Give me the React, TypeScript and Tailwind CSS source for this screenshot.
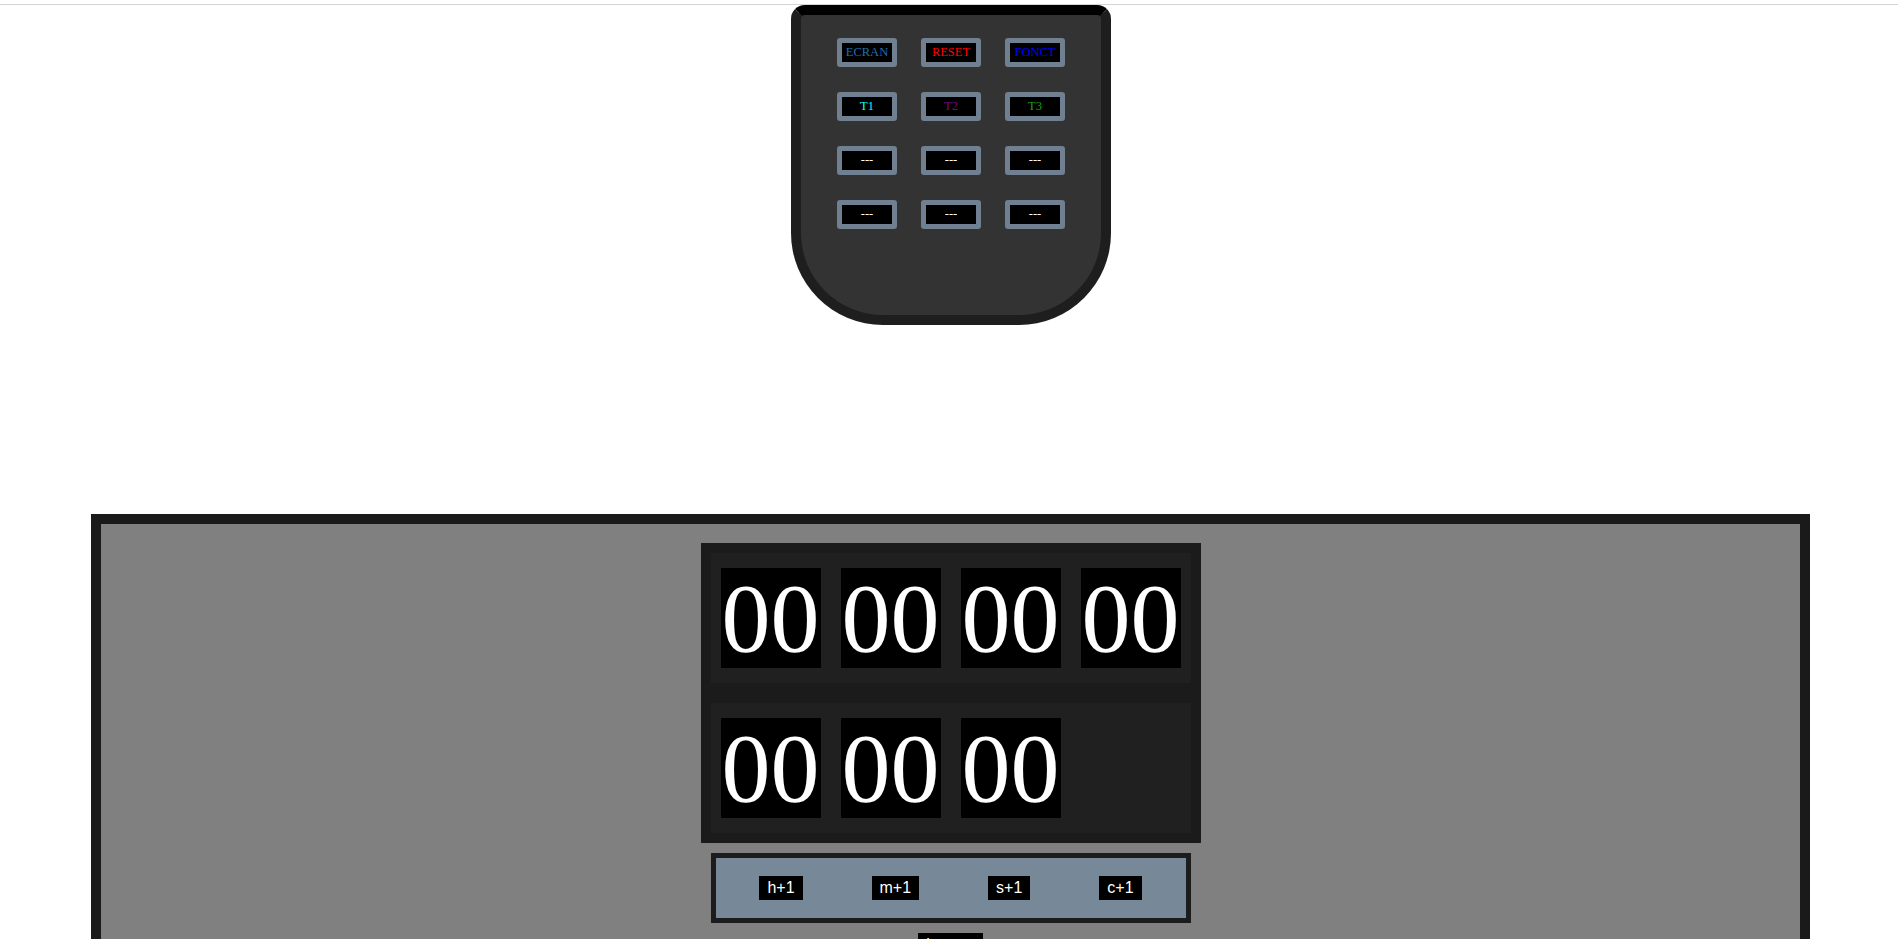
import React from 'react';

type Key = { label: string; color: string };

const keys: Key[] = [
    { label: 'ECRAN', color: 'text-[#1f6fb2]' },
    { label: 'RESET', color: 'text-[#ff0000]' },
    { label: 'FONCT', color: 'text-[#0000ff]' },
    { label: 'T1', color: 'text-[#00ffff]' },
    { label: 'T2', color: 'text-[#800080]' },
    { label: 'T3', color: 'text-[#15a015]' },
    { label: '---', color: 'text-white' },
    { label: '---', color: 'text-white' },
    { label: '---', color: 'text-white' },
    { label: '---', color: 'text-white' },
    { label: '---', color: 'text-white' },
    { label: '---', color: 'text-white' },
];

function Remote() {
    return (
        <div className="ml-[791px] w-[320px] h-[320px] bg-[#333333] border-[10px] border-[#1e1e1e] border-t-black rounded-t-[14px] rounded-b-[92px]">
            <div className="grid grid-cols-3 gap-x-[24px] gap-y-[25px] w-[228px] mx-auto pt-[23px]">
                {keys.map((k, i) => (
                    <button
                        key={i}
                        className={`w-[60px] h-[29px] border-[5px] border-[#708090] rounded-[3px] bg-black flex items-center justify-center text-[12.5px] font-normal leading-none font-['Liberation_Serif',serif] ${k.color}`}
                    >
                        {k.label}
                    </button>
                ))}
            </div>
        </div>
    );
}

function Digit() {
    return (
        <div className="w-[100px] h-[100px] bg-black flex items-center justify-center text-white text-[98px] leading-none font-['Liberation_Serif',serif]">
            00
        </div>
    );
}

function Clock() {
    return (
        <div className="w-[500px] h-[300px] bg-[#1b1b1b] p-[10px] flex flex-col gap-[20px]">
            <div className="h-[130px] bg-[#202020] px-[10px] py-[15px] flex gap-[20px]">
                <Digit />
                <Digit />
                <Digit />
                <Digit />
            </div>
            <div className="h-[130px] bg-[#202020] px-[10px] py-[15px] flex gap-[20px]">
                <Digit />
                <Digit />
                <Digit />
            </div>
        </div>
    );
}

export default function App() {
    const steps = ['h+1', 'm+1', 's+1', 'c+1'];
    return (
        <div className="min-h-screen bg-white">
            <div className="pt-[4px]">
                <div className="h-px bg-[#d4d4d4]" />
            </div>

            {/* Télécommande */}
            <Remote />

            {/* Chronomètre */}
            <div className="mt-[189px] ml-[91px] w-[1719px] border-[10px] border-[#1a1a1a] bg-[#808080] pb-[40px]">
                <div className="flex flex-col items-center pt-[19px]">
                    <Clock />
                    <div className="mt-[10px] w-[480px] h-[70px] border-[5px] border-[#1c1c1c] bg-[#778899] flex items-center justify-center gap-[69px]">
                        {steps.map((s) => (
                            <button
                                key={s}
                                className="h-[24px] px-[8px] bg-black text-white text-[16px] leading-none font-['Liberation_Sans',sans-serif]"
                            >
                                {s}
                            </button>
                        ))}
                    </div>
                    <button className="mt-[10px] w-[65px] h-[24px] bg-black text-white text-[16px] leading-none font-['Liberation_Sans',sans-serif]">
                        Lancer
                    </button>
                </div>
            </div>
        </div>
    );
}
